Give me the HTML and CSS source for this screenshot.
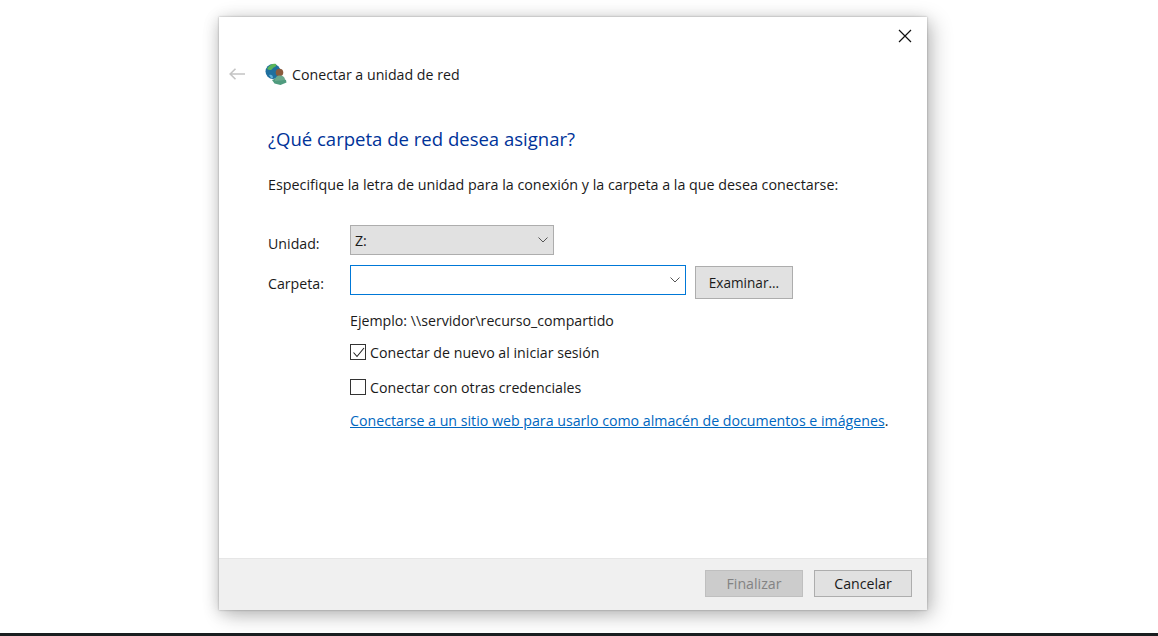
FILE: index.html
```html
<!DOCTYPE html>
<html lang="es">
<head>
<meta charset="utf-8">
<title>Conectar a unidad de red</title>
<link rel="stylesheet" href="styles.css">
</head>
<body>
<div class="stage">
  <div class="dialog">
    <div class="content">
      <div class="close-row">
        <svg class="close" width="14" height="14" viewBox="0 0 14 14"><path d="M1 1L13 13M13 1L1 13" stroke="#111" stroke-width="1.2" fill="none"/></svg>
      </div>
      <div class="titlebar">
        <svg class="back" width="16" height="12" viewBox="0 0 16 12"><path d="M1 6H16M6.5 .8L1.2 6l5.3 5.2" stroke="#c4c4c4" stroke-width="1.6" fill="none"/></svg>
        <svg class="netdrive" width="22" height="22" viewBox="0 0 22 22">
          <path d="M7 17l7-3 7 3 .5 2.500-6 2.500-6-1.500z" fill="#4f9b7e"/>
          <circle cx="8" cy="8.500" r="7.500" fill="#1f6f9e"/>
          <path d="M2 6c2-4 6-6 9-5 1 2-1 3-3 4-1 2-3 3-6 1z" fill="#5ab45a"/>
          <path d="M4 12c2-1 4 0 4 3l-2 0z" fill="#63b1d8"/>
          <circle cx="14.500" cy="9.500" r="3.800" fill="#8a5a3c"/>
          <path d="M10 18c0-4 2-5.500 5-5.500s5 1.500 5 4.500z" fill="#6aa88c"/>
        </svg>
        <span class="title">Conectar a unidad de red</span>
      </div>
      <h1 class="heading">¿Qué carpeta de red desea asignar?</h1>
      <p class="intro">Especifique la letra de unidad para la conexión y la carpeta a la que desea conectarse:</p>
      <div class="form">
        <div class="row row-drive">
          <span class="label label-drive">Unidad:</span>
          <div class="select">
            <span>Z:</span>
            <svg class="chev" width="10" height="6" viewBox="0 0 10 6"><path d="M.5 .5L5 5 9.500 .5" stroke="#555" fill="none"/></svg>
          </div>
        </div>
        <div class="row row-folder">
          <span class="label label-folder">Carpeta:</span>
          <div class="combo">
            <svg class="chev" width="10" height="6" viewBox="0 0 10 6"><path d="M.5 .5L5 5 9.500 .5" stroke="#555" fill="none"/></svg>
          </div>
          <div class="btn browse">Examinar...</div>
        </div>
        <div class="options">
          <div class="example">Ejemplo: \\servidor\recurso_compartido</div>
          <div class="check check-first">
            <span class="box"><svg width="13" height="13" viewBox="0 0 13 13"><path d="M1.500 6.500L5 10.500 12 2" stroke="#222" stroke-width="1.100" fill="none"/></svg></span>
            <span>Conectar de nuevo al iniciar sesión</span>
          </div>
          <div class="check check-second">
            <span class="box"></span>
            <span>Conectar con otras credenciales</span>
          </div>
          <div class="linkline"><a class="link" href="#">Conectarse a un sitio web para usarlo como almacén de documentos e imágenes</a><span class="dot">.</span></div>
        </div>
      </div>
    </div>
    <div class="footer">
      <div class="btn disabled">Finalizar</div>
      <div class="btn">Cancelar</div>
    </div>
  </div>
</div>
<div class="bottombar"></div>
</body>
</html>
```
FILE: styles.css
```css
* { box-sizing: border-box; }
html, body { margin: 0; height: 100%; }
body {
  width: 1158px;
  height: 636px;
  overflow: hidden;
  background: #fff;
  color: #1a1a1a;
  font-family: "Open Sans", "Noto Sans", sans-serif;
  font-size: 14.2px;
  display: flex;
  flex-direction: column;
}
.stage { flex: 1; padding: 17px 0 0 219px; }
.dialog {
  width: 708px;
  height: 593px;
  background: #fff;
  display: flex;
  flex-direction: column;
  box-shadow: 0 0 2px rgba(0,0,0,.3), 5px 5px 20px rgba(0,0,0,.24), -2px 2px 14px rgba(0,0,0,.13);
}
.content { flex: 1; padding: 12px 15px 0 9px; }
.close-row { display: flex; justify-content: flex-end; height: 14px; }
.titlebar { display: flex; align-items: center; height: 22px; margin-top: 20px; }
.back { margin-left: 1px; }
.netdrive { margin-left: 20px; }
.title { margin-left: 5px; line-height: 22px; padding-top: 1px; }
.heading {
  margin: 41px 0 0 40px;
  font-size: 18.55px;
  font-weight: 400;
  line-height: 26px;
  color: #003399;
}
.intro { margin: 23px 0 0 40px; line-height: 20px; font-size: 14.3px; }
.form { margin: 30px 0 0 40px; }
.row { display: flex; }
.label { width: 82px; line-height: 20px; padding-top: 9px; }
.select {
  width: 204px;
  height: 30px;
  background: #e1e1e1;
  border: 1px solid #adadad;
  display: flex;
  align-items: center;
  justify-content: space-between;
  padding: 0 5px 0 4px;
}
.row-folder { margin-top: 10px; }
.combo {
  width: 336px;
  height: 30px;
  border: 1px solid #0078d7;
  display: flex;
  align-items: center;
  justify-content: flex-end;
  padding: 0 5px;
}
.btn {
  width: 98px;
  height: 27px;
  background: #e1e1e1;
  border: 1px solid #adadad;
  display: flex;
  align-items: center;
  justify-content: center;
}
.browse { height: 33px; margin-left: 9px; margin-top: 1px; font-size: 13.6px; }
.options { margin-left: 82px; }
.example { margin-top: 12px; line-height: 20px; }
.check { display: flex; align-items: center; height: 20px; }
.check-first { margin-top: 11px; }
.check-second { margin-top: 15px; }
.box {
  width: 16px;
  height: 16px;
  border: 1px solid #333;
  margin-right: 4px;
  display: flex;
  align-items: center;
  justify-content: center;
}
.linkline { margin-top: 14px; line-height: 20px; }
.link { color: #0067c0; }
.footer {
  height: 52px;
  background: #f0f0f0;
  border-top: 1px solid #e6e6e6;
  display: flex;
  justify-content: flex-end;
  align-items: center;
  gap: 11px;
  padding: 0 15px 2px 0;
}
.disabled { background: #cccccc; border-color: #bfbfbf; color: #838383; }
.bottombar { height: 3px; background: #1a1e20; }
```
